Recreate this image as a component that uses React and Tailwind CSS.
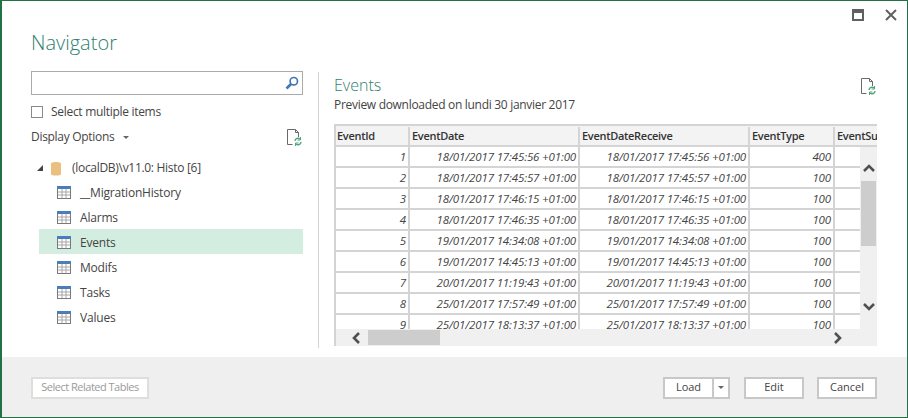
const tables = ["__MigrationHistory", "Alarms", "Events", "Modifs", "Tasks", "Values"];

const rows = [
  [1, "18/01/2017 17:45:56 +01:00", 400],
  [2, "18/01/2017 17:45:57 +01:00", 100],
  [3, "18/01/2017 17:46:15 +01:00", 100],
  [4, "18/01/2017 17:46:35 +01:00", 100],
  [5, "19/01/2017 14:34:08 +01:00", 100],
  [6, "19/01/2017 14:45:13 +01:00", 100],
  [7, "20/01/2017 11:19:43 +01:00", 100],
  [8, "25/01/2017 17:57:49 +01:00", 100],
  [9, "25/01/2017 18:13:37 +01:00", 100],
];

function TableIcon() {
  return (
    <svg width="14" height="13" viewBox="0 0 14 13" className="shrink-0">
      <rect x="0" y="0" width="14" height="13" fill="#7a7a7a" />
      <rect x="0" y="0" width="14" height="3" fill="#4a7ebb" />
      <rect x="1" y="3" width="12" height="9" fill="#fff" />
      <path d="M1 6h12M1 9h12M5 3v9M9 3v9" stroke="#a6a6a6" strokeWidth="1" />
    </svg>
  );
}

function RefreshDocIcon() {
  return (
    <svg width="16" height="17" viewBox="0 0 16 17" className="shrink-0">
      <path d="M6.5 15.500H1.500V0.500H9.500L12.500 3.500V8" fill="none" stroke="#6a6a6a" strokeWidth="1" />
      <path d="M9.500 0.500V3.500H12.500" fill="none" stroke="#6a6a6a" strokeWidth="1" />
      <path d="M9 12a3 3 0 0 1 5-2M15 13a3 3 0 0 1-5 2" fill="none" stroke="#4fa57c" strokeWidth="1.4" />
      <path d="M14.500 8v3h-3M9.500 17v-3h3" fill="none" stroke="#4fa57c" strokeWidth="1" />
    </svg>
  );
}

function SearchIcon() {
  return (
    <svg width="14" height="14" viewBox="0 0 14 14">
      <circle cx="8.800" cy="5.200" r="3.700" fill="none" stroke="#3f78b5" strokeWidth="1.700" />
      <path d="M6 8L1.500 12.500" stroke="#3f78b5" strokeWidth="2.600" />
    </svg>
  );
}

function Chevron({ d }) {
  return (
    <svg width="12" height="12" viewBox="0 0 12 12">
      <path d={d} fill="none" stroke="#505050" strokeWidth="2.600" />
    </svg>
  );
}

function Cell({ className, children }) {
  return (
    <div className={`shrink-0 h-full border-r-2 border-[#d4d4d4] flex items-center ${className}`}>
      {children}
    </div>
  );
}

export default function App() {
  return (
    <div className="w-[908px] h-[418px] bg-white border border-[#217346] border-l-2 flex flex-col overflow-hidden font-['Open_Sans','Noto_Sans',sans-serif] text-[#444]">
      <div className="flex justify-end items-center gap-[21px] h-[27px] pr-[10px]">
        <div className="w-[12px] h-[12px] border-2 border-t-[4px] border-[#606060]" />
        <svg width="12" height="12" viewBox="0 0 12 12">
          <path d="M1 1l10 10M11 1L1 11" stroke="#606060" strokeWidth="2" />
        </svg>
      </div>

      <div className="flex-1 flex min-h-0 pl-[29px] pr-[30px]">
        <div className="w-[272px] shrink-0 flex flex-col">
          <h1 className="text-[20px] leading-[28px] font-light text-[#2f7f70] mt-[1px]">Navigator</h1>
          <div className="mt-[14px] h-[24px] border border-[#ababab] flex items-center justify-end pr-[3px]">
            <SearchIcon />
          </div>
          <div className="flex items-center mt-[10px] h-[14px]">
            <div className="w-[12px] h-[12px] border border-[#8a8a8a]" />
            <span className="ml-[8px] text-[12px] tracking-[-0.3px]">Select multiple items</span>
          </div>
          <div className="flex items-center justify-between mt-[8px] h-[20px] pr-[1px]">
            <div className="flex items-center">
              <span className="text-[12px] tracking-[-0.3px]">Display Options</span>
              <span className="ml-[9px] w-0 h-0 border-x-[3px] border-x-transparent border-t-[3px] border-t-[#666]" />
            </div>
            <RefreshDocIcon />
          </div>
          <div className="flex items-center mt-[8px] h-[24px] pl-[6px] pt-[2px]">
            <span className="w-0 h-0 border-l-[6px] border-l-transparent border-b-[6px] border-b-[#444]" />
            <svg width="10" height="15" viewBox="0 0 10 15" className="ml-[8px]">
              <path d="M0 2.500C0 .5 10 .5 10 2.500V13C10 15 0 15 0 13Z" fill="#e9c07f" />
            </svg>
            <span className="ml-[11px] text-[12px] tracking-[-0.3px]">(localDB)\v11.0: Histo [6]</span>
          </div>
          {tables.map((name) => (
            <div
              key={name}
              className={`flex items-center h-[25px] ml-[8px] pl-[18px] pt-[2px] ${name === "Events" ? "bg-[#d3eee0]" : ""}`}
            >
              <TableIcon />
              <span className="ml-[9px] text-[12px] tracking-[-0.2px]">{name}</span>
            </div>
          ))}
        </div>

        <div className="w-[1px] bg-[#d4d4d4] ml-[15px] mt-[44px] mb-[9px] shrink-0" />

        <div className="flex-1 min-w-0 pl-[15px] flex flex-col">
          <div className="flex justify-between mt-[46px]">
            <div>
              <h2 className="text-[16px] leading-[22px] font-light text-[#2f7f70]">Events</h2>
              <p className="text-[12px] leading-[16px] tracking-[-0.3px] mt-[1px]">Preview downloaded on lundi 30 janvier 2017</p>
            </div>
            <div className="pt-[4px] pr-[1px]">
              <RefreshDocIcon />
            </div>
          </div>

          <div className="mt-[11px] h-[222px] w-[543px] border-l-2 border-t-2 border-[#d4d4d4] flex flex-col overflow-hidden text-[11px] text-[#444]">
            <div className="flex h-[21px] shrink-0 bg-[#f3f3f3] border-b-2 border-[#d4d4d4] font-semibold tracking-[-0.3px] text-[#333] pt-[1px]">
              <Cell className="w-[74px] pl-[1px]">EventId</Cell>
              <Cell className="w-[170px] pl-[2px]">EventDate</Cell>
              <Cell className="w-[170px] pl-[2px]">EventDateReceive</Cell>
              <Cell className="w-[85px] pl-[2px]">EventType</Cell>
              <div className="pl-[2px] flex items-center whitespace-nowrap overflow-hidden">EventSu</div>
            </div>
            <div className="flex-1 min-h-0 flex">
              <div className="w-[525px] overflow-hidden">
                {rows.map(([id, date, type]) => (
                  <div key={id} className="flex h-[21px] border-b-2 border-[#d4d4d4] italic text-[11.5px] tracking-[-0.15px]">
                    <Cell className="w-[74px] justify-end pr-[2px]">{id}</Cell>
                    <Cell className="w-[170px] justify-end pr-[2px]">{date}</Cell>
                    <Cell className="w-[170px] justify-end pr-[2px]">{date}</Cell>
                    <Cell className="w-[85px] justify-end pr-[2px]">{type}</Cell>
                  </div>
                ))}
              </div>
              <div className="w-[17px] bg-[#f0f0f0] flex flex-col items-center">
                <div className="h-[34px] flex items-end justify-center pb-[7px]">
                  <Chevron d="M1 9l5-5 5 5" />
                </div>
                <div className="w-[15px] h-[65px] bg-[#cdcdcd]" />
                <div className="flex-1 flex items-end pb-[16px]">
                  <Chevron d="M1 3l5 5 5-5" />
                </div>
              </div>
            </div>
            <div className="h-[17px] shrink-0 bg-[#f0f0f0] flex items-center">
              <div className="ml-[14px]">
                <Chevron d="M9 1L4 6l5 5" />
              </div>
              <div className="ml-[6px] w-[72px] h-[15px] bg-[#cdcdcd]" />
              <div className="ml-auto mr-[33px]">
                <Chevron d="M3 1l5 5-5 5" />
              </div>
            </div>
          </div>
        </div>
      </div>

      <div className="h-[60px] shrink-0 bg-[#efefef] flex items-center pl-[29px] pr-[30px] text-[11px] pt-[1px]">
        <button className="w-[118px] h-[22px] bg-white border-2 border-[#dedede] text-[#9a9a9a] tracking-[-0.5px]">Select Related Tables</button>
        <div className="ml-auto flex h-[22px] bg-white border-2 border-[#c8c8c8]">
          <button className="w-[47px]">Load</button>
          <div className="w-[16px] border-l-2 border-[#c8c8c8] flex items-center justify-center">
            <span className="w-0 h-0 border-x-[3px] border-x-transparent border-t-[3px] border-t-[#666]" />
          </div>
        </div>
        <button className="ml-[14px] w-[60px] h-[22px] bg-white border-2 border-[#c8c8c8]">Edit</button>
        <button className="ml-[13px] w-[60px] h-[22px] bg-white border-2 border-[#c8c8c8]">Cancel</button>
      </div>
    </div>
  );
}
